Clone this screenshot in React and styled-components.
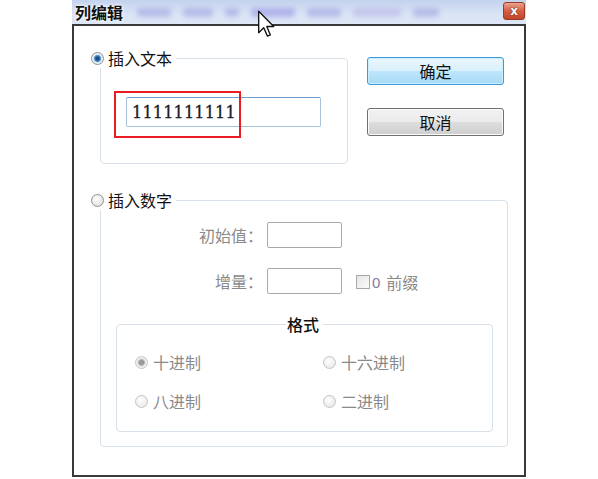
import React from "react";
import styled, { createGlobalStyle } from "styled-components";

const GlobalStyle = createGlobalStyle`
  body {
    margin: 0;
    background: #ffffff;
    font-family: "Noto Sans CJK SC", "Noto Sans", sans-serif;
  }
`;

const Page = styled.div`
  position: relative;
  width: 598px;
  height: 479px;
  display: flex;
  justify-content: center;
  overflow: hidden;
`;

const Window = styled.div`
  width: 454px;
  display: flex;
  flex-direction: column;
`;

const TitleBar = styled.div`
  height: 24px;
  display: flex;
  align-items: center;
  padding: 0 1px 0 3px;
  background: linear-gradient(#c3d3ee, #d9e4f5 60%, #dde7f6);
  overflow: hidden;
`;

const Title = styled.span`
  font-size: 16px;
  font-weight: 700;
  color: #111;
  line-height: 20px;
  text-shadow: 0 0 4px #fff, 0 0 2px #fff;
`;

const Smudges = styled.div`
  flex: 1;
  display: flex;
  align-items: center;
  gap: 12px;
  padding: 0 10px 0 14px;
  filter: blur(2.4px);
`;

const Smudge = styled.span`
  height: 9px;
  width: ${(p) => p.w}px;
  border-radius: 4px;
  background: ${(p) => p.c || "rgba(128, 132, 214, 0.38)"};
`;

const CloseButton = styled.div`
  width: 22px;
  height: 18px;
  margin-top: -2px;
  box-sizing: border-box;
  border: 1px solid #9b3b24;
  border-radius: 3px;
  background: linear-gradient(#eaa48d, #d45f43 50%, #c2442a);
  display: flex;
  align-items: center;
  justify-content: center;
  color: #fff;
  font: 700 12px "DejaVu Sans", sans-serif;
  text-shadow: 0 0 1px #5a1a0a, 0 0 1px #5a1a0a;
`;

const Body = styled.div`
  height: 453px;
  box-sizing: border-box;
  border: 2px solid #3a3a3a;
  padding: 31px 0 0 26px;
  display: flex;
  flex-direction: column;
`;

const TopRow = styled.div`
  display: flex;
  align-items: flex-start;
  gap: 19px;
`;

const Fieldset = styled.div`
  box-sizing: border-box;
  width: ${(p) => p.w}px;
  height: ${(p) => p.h}px;
  margin: ${(p) => p.m || "0"};
  border: 1px solid #d8e1ea;
  border-radius: 4px;
  display: flex;
  flex-direction: column;
`;

const Legend = styled.div`
  align-self: ${(p) => (p.center ? "center" : "flex-start")};
  height: 20px;
  margin: ${(p) => (p.center ? "-11px 0 0 0" : "-11px 0 0 -10px")};
  padding: 0 3px 0 0;
  background: #fff;
  display: flex;
  align-items: center;
  gap: 3px;
  font-size: 16px;
  line-height: 20px;
  color: #111;
`;

const RadioDot = styled.span`
  width: 13px;
  height: 13px;
  box-sizing: border-box;
  border-radius: 50%;
  flex: none;
  border: 1px solid ${(p) => (p.disabled ? "#c4c4c4" : "#8f9194")};
  background: ${(p) =>
    p.checked
      ? p.disabled
        ? "radial-gradient(circle, #9a9a9a 0 2.5px, #d8d8d8 3.5px, #f3f3f3 5px)"
        : "radial-gradient(circle, #1c4f86 0 1.5px, #4d8fc9 3px, #cfe6f7 4px, #eef2f6 5px)"
      : p.disabled
      ? "radial-gradient(circle at 40% 35%, #ffffff, #e2e2e2)"
      : "radial-gradient(circle at 40% 35%, #ffffff, #d6d6d6)"};
`;

const TextInputWrap = styled.div`
  position: relative;
  margin: 29px 0 0 25px;
  width: 195px;
`;

const TextInput = styled.div`
  box-sizing: border-box;
  width: 195px;
  height: 30px;
  border: 1px solid #a9c3dd;
  border-top-color: #6f9ccb;
  border-radius: 2px;
  padding: 0 5px;
  display: flex;
  align-items: center;
  font: 16px "DejaVu Serif", serif;
  letter-spacing: 0.2px;
  color: #1a1a28;
  -webkit-text-stroke: 0.3px #1a1a28;
`;

const Highlight = styled.div`
  position: absolute;
  left: -12px;
  top: -6px;
  width: 127px;
  height: 47px;
  box-sizing: border-box;
  border: 2px solid #ec1c24;
`;

const ButtonColumn = styled.div`
  display: flex;
  flex-direction: column;
  gap: 23px;
`;

const Button = styled.div`
  width: 137px;
  height: 28px;
  box-sizing: border-box;
  border-radius: 3px;
  border: 1px solid ${(p) => (p.primary ? "#3c9bd8" : "#707070")};
  box-shadow: inset 0 0 0 1px ${(p) => (p.primary ? "#c9ecff" : "#fbfbfb")};
  background: ${(p) =>
    p.primary
      ? "linear-gradient(#eaf6fd, #d9f0fc 50%, #bee6fd 51%, #a7d9f5)"
      : "linear-gradient(#f2f2f2, #ebebeb 50%, #dddddd 51%, #cfcfcf)"};
  display: flex;
  align-items: center;
  justify-content: center;
  font-size: 16px;
  color: #111;
`;

const FormGrid = styled.div`
  margin-top: 12px;
  display: grid;
  grid-template-columns: 162px 75px auto;
  column-gap: 4px;
  row-gap: 19px;
  align-items: center;
`;

const FieldLabel = styled.span`
  text-align: right;
  font-size: 16px;
  color: #8a8a8a;
`;

const SmallInput = styled.div`
  width: 75px;
  height: 26px;
  box-sizing: border-box;
  border: 1px solid #aaaaaa;
  border-radius: 2px;
  background: #fff;
`;

const CheckRow = styled.label`
  margin: 3px 0 0 10px;
  display: flex;
  align-items: center;
  gap: 2px;
  font-size: 16px;
  color: #8a8a8a;
`;

const CheckBox = styled.span`
  width: 14px;
  height: 14px;
  box-sizing: border-box;
  border: 1px solid #a8a8a8;
  background: linear-gradient(135deg, #e6e6e6, #fafafa);
`;

const Zero = styled.span`
  font: 15px "Liberation Sans", sans-serif;
  color: #7d7d9a;
  margin-right: 4px;
`;

const OptionGrid = styled.div`
  margin: 18px 0 0 18px;
  display: grid;
  grid-template-columns: 188px auto;
  row-gap: 19px;
`;

const Option = styled.div`
  height: 20px;
  display: flex;
  align-items: center;
  gap: 5px;
  font-size: 16px;
  color: #8a8a8a;
`;

const LegendText = styled.span`
  padding: 0 1px;
  font-weight: ${(p) => (p.bold ? 500 : 400)};
`;

const Cursor = styled.svg`
  position: absolute;
  left: 257px;
  top: 10px;
`;

const formats = [
  { label: "十进制", checked: true },
  { label: "十六进制" },
  { label: "八进制" },
  { label: "二进制" },
];

export default function App() {
  return (
    <>
      <GlobalStyle />
      <Page>
        <Window>
          <TitleBar>
            <Title>列编辑</Title>
            <Smudges>
              <Smudge w={34} />
              <Smudge w={30} />
              <Smudge w={14} />
              <Smudge w={44} c="rgba(120, 110, 220, 0.4)" />
              <Smudge w={34} />
              <Smudge w={48} c="rgba(170, 150, 220, 0.35)" />
              <Smudge w={26} />
            </Smudges>
            <CloseButton>x</CloseButton>
          </TitleBar>
          <Body>
            <TopRow>
              <Fieldset w={248} h={106} m="1px 0 0 0">
                <Legend>
                  <RadioDot checked />
                  <LegendText>插入文本</LegendText>
                </Legend>
                <TextInputWrap>
                  <TextInput>1111111111</TextInput>
                  <Highlight />
                </TextInputWrap>
              </Fieldset>
              <ButtonColumn>
                <Button primary>确定</Button>
                <Button>取消</Button>
              </ButtonColumn>
            </TopRow>
            <Fieldset w={408} h={247} m="36px 0 0 0">
              <Legend>
                <RadioDot />
                <LegendText>插入数字</LegendText>
              </Legend>
              <FormGrid>
                <FieldLabel>初始值：</FieldLabel>
                <SmallInput />
                <span />
                <FieldLabel>增量：</FieldLabel>
                <SmallInput />
                <CheckRow>
                  <CheckBox />
                  <Zero>0</Zero>
                  前缀
                </CheckRow>
              </FormGrid>
              <Fieldset w={377} h={108} m="30px 0 0 15px">
                <Legend center>
                  <LegendText bold>格式</LegendText>
                </Legend>
                <OptionGrid>
                  {formats.map((f) => (
                    <Option key={f.label}>
                      <RadioDot disabled checked={f.checked} />
                      {f.label}
                    </Option>
                  ))}
                </OptionGrid>
              </Fieldset>
            </Fieldset>
          </Body>
        </Window>
        <Cursor width="18" height="28" viewBox="0 0 13 21">
          <path
            d="M1 1 L1 17 L4.8 13.3 L7.6 19.6 L9.8 18.7 L7.1 12.4 L12.3 12.4 Z"
            fill="#fff"
            stroke="#111"
            strokeWidth="1"
            strokeLinejoin="round"
          />
        </Cursor>
      </Page>
    </>
  );
}
